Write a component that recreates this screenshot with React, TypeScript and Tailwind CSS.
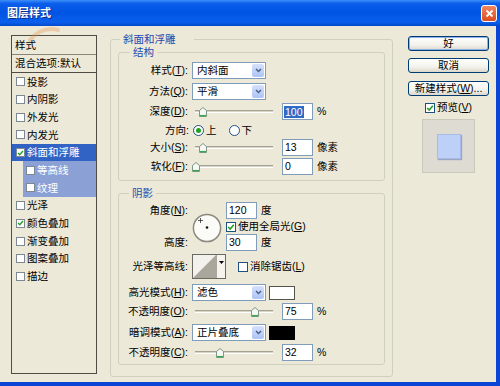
import type { ReactNode } from "react";

const font = "font-['Liberation_Sans','Noto_Sans_CJK_SC',sans-serif]";

const layers = [
  { name: "投影" },
  { name: "内阴影" },
  { name: "外发光" },
  { name: "内发光" },
  { name: "斜面和浮雕", on: true, active: true },
  { name: "等高线", sub: true },
  { name: "纹理", sub: true },
  { name: "光泽" },
  { name: "颜色叠加", on: true },
  { name: "渐变叠加" },
  { name: "图案叠加" },
  { name: "描边" },
];

function Check({ on, small }: { on?: boolean; small?: boolean }) {
  return (
    <span
      className={
        small
          ? "flex h-[9px] w-[9px] shrink-0 items-center justify-center border border-[#7d8893] bg-white"
          : "flex h-[10px] w-[10px] shrink-0 items-center justify-center border border-[#1c5180] bg-white"
      }
    >
      {on && (
        <svg width="8" height="8" viewBox="0 0 8 8">
          <path d="M1.2 4 L3.2 6 L6.8 1.8" fill="none" stroke="#21a121" strokeWidth="1.6" />
        </svg>
      )}
    </span>
  );
}

function Radio({ on }: { on?: boolean }) {
  return (
    <span className="flex h-[11px] w-[11px] shrink-0 items-center justify-center rounded-full border border-[#1c5180] bg-white">
      {on && <span className="h-[5px] w-[5px] rounded-full bg-[#21a121]" />}
    </span>
  );
}

function Select({ value }: { value: string }) {
  return (
    <div className="flex h-[17px] w-[74px] shrink-0 items-center border border-[#7f9db9] bg-white">
      <span className="flex-1 pl-[4px]">{value}</span>
      <span className="mr-[1px] flex h-[13px] w-[12px] items-center justify-center rounded-[2px] bg-[linear-gradient(180deg,#d6e1fc,#adc3f6)]">
        <svg width="7" height="5" viewBox="0 0 7 5">
          <path d="M1 1 L3.5 3.5 L6 1" fill="none" stroke="#4d6185" strokeWidth="1.5" />
        </svg>
      </span>
    </div>
  );
}

function Field({ value, selected }: { value: string; selected?: boolean }) {
  return (
    <div className="flex h-[17px] w-[31px] shrink-0 items-center border border-[#7f9db9] bg-white pl-[1px]">
      <span className={selected ? "bg-[#316ac5] px-[1px] leading-[12px] text-white" : "px-[1px]"}>{value}</span>
    </div>
  );
}

function Slider({ at }: { at: number }) {
  return (
    <div className="relative flex h-[16px] w-[82px] shrink-0 items-center pl-[3px] pr-[1px]">
      <div className="h-[3px] flex-1 border-t border-b border-t-[#a5a294] border-b-white bg-[#d9d5c6]" />
      <svg className="absolute top-[3px]" style={{ left: at }} width="8" height="10" viewBox="0 0 8 10">
        <path d="M4 0.5 L7.5 3.5 V9.5 H0.5 V3.5 Z" fill="#f7f7f3" stroke="#7d9784" />
        <path d="M1 8.6 H7" stroke="#35a852" strokeWidth="1.3" />
      </svg>
    </div>
  );
}

function Row({ label, children, className }: { label: ReactNode; children: ReactNode; className: string }) {
  return (
    <div className={className}>
      <span className="w-[73px] shrink-0 pr-[4px] text-right">{label}</span>
      {children}
    </div>
  );
}

function Btn({ children, def, className }: { children: ReactNode; def?: boolean; className?: string }) {
  return (
    <div
      className={`flex h-[15px] w-[81px] items-center justify-center rounded-[3px] border border-[#003c74] bg-[linear-gradient(180deg,#ffffff,#f3f2ec_60%,#dcd8cb)] ${
        def ? "shadow-[inset_0_0_0_1px_#8fb1ee]" : ""
      } ${className ?? ""}`}
    >
      {children}
    </div>
  );
}

export default function App() {
  return (
    <div className={`relative flex h-[386px] w-[500px] flex-col overflow-hidden bg-[#ece9d8] text-[10.5px] leading-none text-black ${font}`}>
      <div className="flex h-[26px] shrink-0 items-center justify-between bg-[linear-gradient(180deg,#3d8ff9_0%,#0b5deb_14%,#0054e3_50%,#0a60ec_85%,#0348cc_100%)] pl-[7px] pr-[3px]">
        <span className="text-[11px] font-bold text-white [text-shadow:1px_1px_0_#0a2a8a]">图层样式</span>
        <span className="flex h-[17px] w-[16px] items-center justify-center rounded-[3px] border border-white bg-[linear-gradient(180deg,#f0875e,#dd4a20)]">
          <svg width="9" height="9" viewBox="0 0 9 9">
            <path d="M1.5 1.5 L7.5 7.5 M7.5 1.5 L1.5 7.5" stroke="#fff" strokeWidth="1.8" />
          </svg>
        </span>
      </div>

      <div className="flex flex-1 items-start border-b-[4px] border-r-[4px] border-[#0a45d6]">
        {/* style list */}
        <div className="ml-[11px] mt-[9px] flex h-[339px] w-[86px] flex-col border border-[#4e4c44]">
          <div className="flex h-[19px] items-center border-b border-[#8a877a] pl-[3px]">样式</div>
          <div className="flex h-[18px] items-center border-b border-[#4e4c44] pl-[3px]">混合选项:默认</div>
          {layers.map((l) =>
            l.sub ? (
              <div key={l.name} className="flex h-[17.7px] pl-[11px]">
                <div className="flex flex-1 items-center gap-[2px] bg-[#8ba1d6] pl-[3px] text-white">
                  <Check small on={l.on} />
                  {l.name}
                </div>
              </div>
            ) : (
              <div
                key={l.name}
                className={`flex h-[17.7px] items-center gap-[2px] pl-[4px] ${l.active ? "bg-[#3163c4] text-white" : ""}`}
              >
                <Check small on={l.on} />
                {l.name}
              </div>
            )
          )}
        </div>

        {/* bevel and emboss group */}
        <fieldset className="ml-[13px] mt-[7px] w-[283px] rounded-[3px] border border-[#d0d0bf] pb-[11px]">
          <legend className="ml-[9px] pl-[3px] pr-[18px] leading-[12px] text-[#1f48b0]">斜面和浮雕</legend>

          <fieldset className="mx-[7px] mt-[1px] rounded-[3px] border border-[#d0d0bf] pb-[5px]">
            <legend className="ml-[11px] px-[3px] leading-[12px] text-[#1f48b0]">结构</legend>
            <Row className="mt-[4px] flex h-[17px] items-center" label={<>样式(<u>T</u>):</>}>
              <Select value="内斜面" />
            </Row>
            <Row className="mt-[4px] flex h-[17px] items-center" label={<>方法(<u>Q</u>):</>}>
              <Select value="平滑" />
            </Row>
            <Row className="mt-[3px] flex h-[17px] items-center" label={<>深度(<u>D</u>):</>}>
              <Slider at={7} />
              <div className="ml-[8px]"><Field value="100" selected /></div>
              <span className="ml-[4px]">%</span>
            </Row>
            <div className="mt-[3px] flex h-[15px] items-center">
              <span className="w-[74px] shrink-0 pr-[4px] text-right">方向:</span>
              <Radio on />
              <span className="ml-[2px]">上</span>
              <span className="ml-[12px]"><Radio /></span>
              <span className="ml-[2px]">下</span>
            </div>
            <Row className="mt-[1px] flex h-[17px] items-center" label={<>大小(<u>S</u>):</>}>
              <Slider at={7} />
              <div className="ml-[8px]"><Field value="13" /></div>
              <span className="ml-[4px]">像素</span>
            </Row>
            <Row className="mt-[2px] flex h-[17px] items-center" label={<>软化(<u>F</u>):</>}>
              <Slider at={0} />
              <div className="ml-[8px]"><Field value="0" /></div>
              <span className="ml-[4px]">像素</span>
            </Row>
          </fieldset>

          <fieldset className="mx-[7px] mt-[6px] rounded-[3px] border border-[#d0d0bf] pb-[3px]">
            <legend className="ml-[10px] px-[3px] leading-[12px] text-[#1f48b0]">阴影</legend>
            <div className="mt-[3px] flex">
              <div className="flex w-[73px] shrink-0 flex-col items-end pr-[4px]">
                <span className="flex h-[17px] items-center">角度(<u>N</u>):</span>
                <span className="mt-[15px] flex h-[17px] items-center">高度:</span>
              </div>
              <div className="w-[34px] shrink-0 pt-[11px]">
                <svg width="30" height="30" viewBox="0 0 30 30">
                  <circle cx="15" cy="15" r="13.6" fill="#fbfbf8" stroke="#8c8a7f" strokeWidth="1.5" />
                  <circle cx="15" cy="14.5" r="1.3" fill="#111" />
                  <path d="M8.5 5 V10 M6 7.5 H11" stroke="#333" strokeWidth="0.8" />
                </svg>
              </div>
              <div className="flex flex-col">
                <div className="flex h-[17px] items-center">
                  <Field value="120" />
                  <span className="ml-[4px]">度</span>
                </div>
                <div className="flex h-[15px] items-center gap-[2px]">
                  <Check on />
                  <span>使用全局光(<u>G</u>)</span>
                </div>
                <div className="flex h-[17px] items-center">
                  <Field value="30" />
                  <span className="ml-[4px]">度</span>
                </div>
              </div>
            </div>

            <Row className="mt-[3px] flex h-[25px] items-center" label="光泽等高线:">
              <div className="flex h-[25px] border border-[#6b6a62] bg-white">
                <svg width="23" height="23" viewBox="0 0 23 23">
                  <rect width="23" height="23" fill="#f2f1ec" />
                  <path d="M0 23 L23 0 V23 Z" fill="#a9a79b" />
                </svg>
                <div className="flex w-[9px] justify-center border-l border-[#a9a79b] bg-[#f4f3ee] pt-[6px]">
                  <svg width="5" height="3" viewBox="0 0 5 3">
                    <path d="M0 0 H5 L2.5 3 Z" fill="#000" />
                  </svg>
                </div>
              </div>
              <span className="ml-[12px]"><Check /></span>
              <span className="ml-[2px]">消除锯齿(<u>L</u>)</span>
            </Row>

            <Row className="mt-[5px] flex h-[17px] items-center" label={<>高光模式(<u>H</u>):</>}>
              <Select value="滤色" />
              <div className="ml-[3px] h-[14px] w-[26px] border border-[#55544c] bg-white" />
            </Row>
            <Row className="mt-[2px] flex h-[17px] items-center" label={<>不透明度(<u>O</u>):</>}>
              <Slider at={59} />
              <div className="ml-[8px]"><Field value="75" /></div>
              <span className="ml-[4px]">%</span>
            </Row>
            <Row className="mt-[4px] flex h-[17px] items-center" label={<>暗调模式(<u>A</u>):</>}>
              <Select value="正片叠底" />
              <div className="ml-[3px] h-[14px] w-[26px] border border-black bg-black" />
            </Row>
            <Row className="mt-[3px] flex h-[17px] items-center" label={<>不透明度(<u>C</u>):</>}>
              <Slider at={24} />
              <div className="ml-[8px]"><Field value="32" /></div>
              <span className="ml-[4px]">%</span>
            </Row>
          </fieldset>
        </fieldset>

        {/* buttons */}
        <div className="ml-[15px] mt-[10px] flex w-[81px] flex-col items-center">
          <Btn def>好</Btn>
          <Btn className="mt-[7px]">取消</Btn>
          <Btn className="mt-[8px]">新建样式(<u>W</u>)...</Btn>
          <div className="mt-[5px] flex h-[13px] items-center gap-[2px]">
            <Check on />
            <span>预览(<u>V</u>)</span>
          </div>
          <div className="mt-[5px] flex h-[54px] w-[53px] items-center justify-center border border-[#cbc8bc] bg-[#dddbd2]">
            <div className="h-[25px] w-[24px] border border-[#a7bbe6] bg-[#bcd0f8] shadow-[1px_1px_1px_#9aa6c0]" />
          </div>
        </div>
      </div>

      {/* faint watermark swoosh */}
      <svg className="pointer-events-none absolute left-[28px] top-[26px] opacity-30" width="32" height="16" viewBox="0 0 32 16">
        <path d="M2 14 Q14 0 30 4" fill="none" stroke="#e58a3a" strokeWidth="4" strokeLinecap="round" />
      </svg>
    </div>
  );
}
